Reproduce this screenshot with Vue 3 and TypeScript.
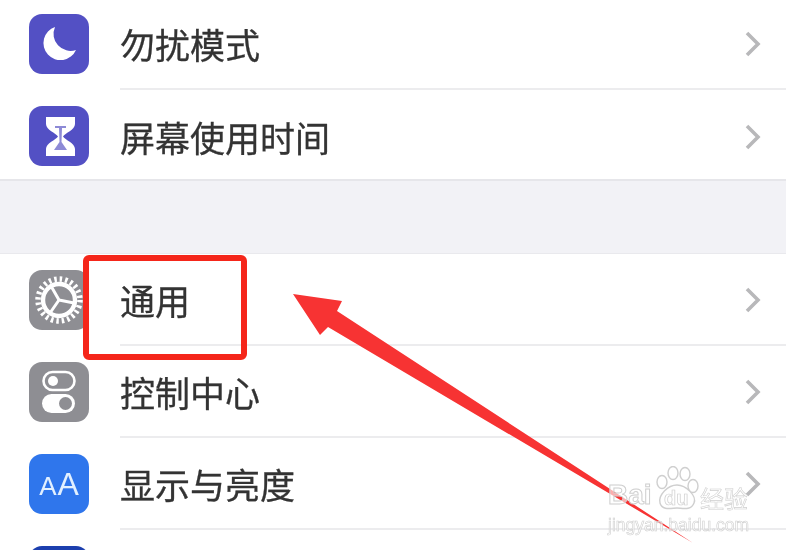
<script setup lang="ts">
interface Row {
  label: string;
  icon: string;
  bg: string;
}

const topRows: Row[] = [
  { label: "勿扰模式", icon: "moon", bg: "#5350c4" },
  { label: "屏幕使用时间", icon: "hourglass", bg: "#5350c4" },
];

const bottomRows: Row[] = [
  { label: "通用", icon: "gear", bg: "#8e8e93" },
  { label: "控制中心", icon: "toggles", bg: "#8e8e93" },
  { label: "显示与亮度", icon: "aa", bg: "#2f76ec" },
  { label: "", icon: "none", bg: "#1c3fae" },
];

const groups = [topRows, bottomRows];
</script>

<template>
  <div class="page">
    <div class="list">
      <div v-for="(rows, g) in groups" :key="g" class="group">
        <div v-for="row in rows" :key="row.icon" class="row">
          <div class="icon" :style="{ background: row.bg }">
            <svg v-if="row.icon === 'moon'" viewBox="0 0 60 60" width="60" height="60">
              <path d="M26 13 A17 17 0 1 0 47 36 A17 17 0 0 1 26 13 Z" fill="#fff" />
            </svg>
            <svg v-else-if="row.icon === 'hourglass'" viewBox="0 0 60 60" width="60" height="60">
              <path d="M17 11 H46 V18 C46 24 36 27 34 30.500 C36 34 46 37 46 43 V50 H17 V43 C17 37 27 34 29 30.500 C27 27 17 24 17 18 Z" fill="#fff" />
              <path d="M26 20 H37 V22 H33 L32.500 36 L38 44 H25 L30.500 36 L30 22 H26 Z" fill="#8d8ad6" />
            </svg>
            <svg v-else-if="row.icon === 'gear'" viewBox="0 0 60 60" width="60" height="60">
              <circle cx="30" cy="30" r="21" fill="none" stroke="#fff" stroke-width="5.500" stroke-dasharray="2.500 3" />
              <circle cx="30" cy="30" r="16" fill="none" stroke="#fff" stroke-width="4.400" />
              <path d="M30 30 L45 33 M30 30 L22 16 M30 30 L21 43" stroke="#fff" stroke-width="3" fill="none" />
            </svg>
            <svg v-else-if="row.icon === 'toggles'" viewBox="0 0 60 60" width="60" height="60">
              <rect x="14.500" y="10" width="31" height="18" rx="9" fill="none" stroke="#fff" stroke-width="2.600" />
              <circle cx="24" cy="19" r="5" fill="#fff" />
              <rect x="13" y="32" width="33" height="19" rx="9.500" fill="#fff" />
              <circle cx="36.500" cy="41.500" r="6.500" fill="#8e8e93" />
            </svg>
            <span v-else-if="row.icon === 'aa'" class="aa"><small>A</small>A</span>
          </div>
          <div class="body">
            <span class="label">{{ row.label }}</span>
            <svg v-if="row.label" class="chev" viewBox="0 0 18 26" width="18" height="26">
              <path d="M3 2 L14 13 L3 24" fill="none" stroke="#b8b8ba" stroke-width="3.600" />
            </svg>
          </div>
        </div>
      </div>
    </div>

    <!-- annotations on top of the screenshot -->
    <div class="mark"></div>
    <svg class="arrow" viewBox="0 0 786 550" width="786" height="550">
      <path d="M293 294 L342 301 L337 311 L693 543 L328 327 L320 335 Z" fill="#f73333" />
    </svg>

    <div class="watermark">
      <div class="brand">
        <span class="bai">Bai</span>
        <div class="paw">
          <svg viewBox="0 0 44 44" width="44" height="44">
            <g fill="rgba(255,255,255,0.6)" stroke="#cfcfcf" stroke-width="1.400">
              <ellipse cx="7" cy="16" rx="5" ry="6.500" />
              <ellipse cx="18" cy="7" rx="5" ry="6.500" />
              <ellipse cx="30" cy="8" rx="5" ry="6.500" />
              <ellipse cx="38" cy="20" rx="5" ry="6.500" />
              <path d="M22 19 C31 19 42 30 39 37 C36 45 27 42 22 42 C17 42 7 45 5 37 C3 29 13 19 22 19 Z" />
            </g>
          </svg>
          <span class="du">du</span>
        </div>
        <span class="jy">经验</span>
      </div>
      <div class="site">jingyan.baidu.com</div>
    </div>
  </div>
</template>

<style scoped>
.page {
  position: relative;
  width: 786px;
  height: 550px;
  overflow: hidden;
  background: #fff;
  font-family: "Noto Sans CJK SC", "Liberation Sans", sans-serif;
}

.list {
  display: flex;
  flex-direction: column;
  gap: 73px;
  margin-top: -2px;
  background: #f2f2f6;
  filter: blur(0.6px);
}

.group {
  background: #fff;
  box-shadow: 0 -1px 0 #e9e9ed;
}

.group:first-child {
  box-sizing: border-box;
  height: 183px;
  overflow: hidden;
  border-bottom: 2px solid #e6e6ea;
}

.row {
  display: flex;
  align-items: center;
  height: 92px;
  padding-left: 29px;
}

.icon {
  flex: none;
  display: flex;
  align-items: center;
  justify-content: center;
  width: 60px;
  height: 60px;
  border-radius: 13px;
  color: #fff;
}

.aa {
  font-family: "Liberation Sans", sans-serif;
  font-size: 32px;
  line-height: 1;
  color: #e2f0ff;
}

.aa small {
  font-size: 26px;
  margin-right: 1px;
}

.body {
  flex: 1;
  align-self: stretch;
  display: flex;
  align-items: center;
  justify-content: space-between;
  margin-left: 31px;
  padding-right: 24px;
  border-bottom: 2px solid #ececee;
}

.row:last-child .body {
  border-bottom: none;
}

.group:last-child .row:nth-child(3) .body {
  border-bottom: 2px solid #ececee;
}

.label {
  font-size: 35px;
  line-height: 1;
  padding-top: 1px;
  color: #333;
  -webkit-text-stroke: 0.3px #333;
}

.chev {
  margin-top: 1px;
}

.mark {
  position: absolute;
  left: 83px;
  top: 255px;
  width: 164px;
  height: 105px;
  box-sizing: border-box;
  border: 6px solid #f5261a;
  border-radius: 6px;
}

.arrow {
  position: absolute;
  left: 0;
  top: 0;
  filter: blur(0.6px);
}

.watermark {
  position: absolute;
  left: 608px;
  top: 466px;
  width: 142px;
  font-family: "Liberation Sans", sans-serif;
  color: rgba(255, 255, 255, 0.6);
  -webkit-text-stroke: 1px #cfcfcf;
  filter: blur(0.5px);
}

.brand {
  display: flex;
  align-items: flex-end;
  height: 44px;
}

.bai {
  flex: none;
  width: 44px;
  font-size: 28px;
  font-weight: 700;
  line-height: 1;
  margin-bottom: 1px;
}

.paw {
  position: relative;
  width: 44px;
  height: 44px;
  margin-left: 3px;
  flex: none;
}

.du {
  position: absolute;
  left: 9px;
  bottom: 0;
  font-size: 20px;
  font-weight: 700;
  -webkit-text-stroke: 0.7px #cfcfcf;
}

.jy {
  flex: none;
  margin-left: 1px;
  font-family: "Noto Sans CJK SC", sans-serif;
  font-size: 24px;
  line-height: 1;
  white-space: nowrap;
  -webkit-text-stroke: 0.600px #cfcfcf;
}

.site {
  margin-top: 6px;
  font-size: 17.500px;
  line-height: 18px;
  white-space: nowrap;
  -webkit-text-stroke: 0.600px #cfcfcf;
}
</style>

<style>
html,
body {
  background: #fff;
}
</style>
